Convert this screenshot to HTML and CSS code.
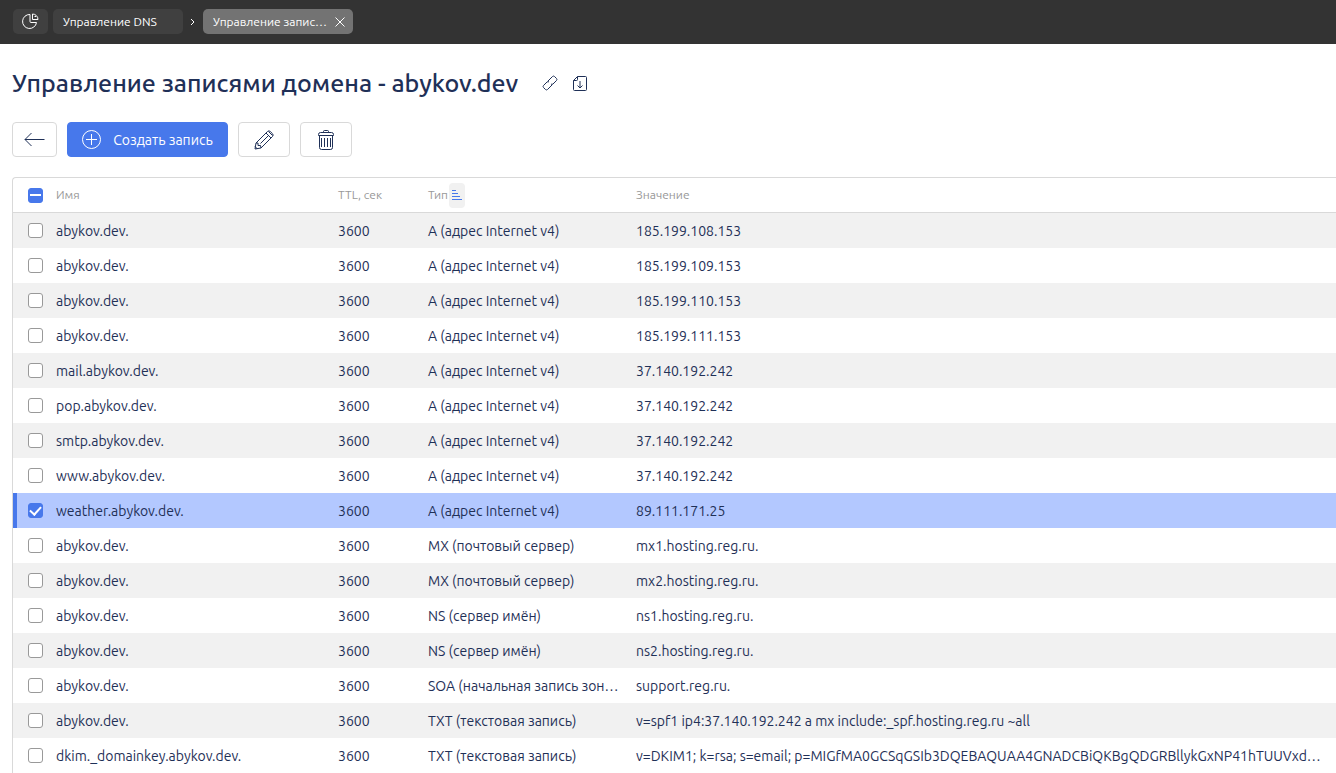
FILE: index.html
```html
<!DOCTYPE html>
<html lang="ru">
<head>
    <meta charset="UTF-8">
    <title>Управление записями домена - abykov.dev</title>
    <link rel="stylesheet" href="styles.css">
</head>
<body>
    <nav class="topbar">
        <a class="tab tab-home" href="#" aria-label="Главная">
            <svg width="17" height="17" viewBox="0 0 17 17"><path d="M8 1.500A7 7 0 1 0 14.500 9.500H9A1 1 0 0 1 8 8.500z"/><path d="M10.500 1v5.500h5.500A5.500 5.500 0 0 0 10.500 1z"/><path d="M12.500 3.500h1.500"/></svg>
        </a>
        <a class="tab tab-link" href="#">Управление DNS</a>
        <svg class="chevron" width="6" height="8" viewBox="0 0 6 8"><path d="M1 1l3 3-3 3"/></svg>
        <div class="tab tab-active">
            <span class="tab-text">Управление записями домена</span>
            <button class="tab-close" aria-label="Закрыть">
                <svg width="10" height="10" viewBox="0 0 10 10"><path d="M.5.5l9 9M9.500.5l-9 9"/></svg>
            </button>
        </div>
    </nav>

    <main class="page">
        <div class="page-header">
            <h1>Управление записями домена - abykov.dev</h1>
            <button class="icon-button" aria-label="Ссылка">
                <svg width="16" height="16" viewBox="0 0 16 16"><path d="M6 6L10.500 1.500a1.500 1.500 0 0 1 2 0l2 2a1.500 1.500 0 0 1 0 2L11 9a1.500 1.500 0 0 1-2 0"/><path d="M10 10L5.500 14.500a1.500 1.500 0 0 1-2 0l-2-2a1.500 1.500 0 0 1 0-2L5 7a1.500 1.500 0 0 1 2 0"/></svg>
            </button>
            <button class="icon-button" aria-label="Экспорт">
                <svg width="14" height="15" viewBox="0 0 14 15"><path d="M4.500.5h8a1 1 0 0 1 1 1v12a1 1 0 0 1-1 1h-11a1 1 0 0 1-1-1v-9zM4.500.5v3a1 1 0 0 1-1 1h-3M7 5v7M4.500 9.500L7 12l2.500-2.500"/></svg>
            </button>
        </div>

        <div class="toolbar">
            <button class="btn btn-back" aria-label="Назад">
                <svg width="21" height="15" viewBox="0 0 21 15"><path d="M20.500 7.500H1M7.500 1L1 7.500 7.500 14"/></svg>
            </button>
            <button class="btn btn-primary">
                <svg width="19" height="19" viewBox="0 0 19 19"><circle cx="9.500" cy="9.500" r="9"/><path d="M9.500 4v11M4 9.500h11"/></svg>
                Создать запись
            </button>
            <button class="btn btn-icon" aria-label="Изменить">
                <svg width="20" height="20" viewBox="0 0 20 20"><path d="M1 19l1-6L13.500 1.500a2 2 0 0 1 2.800 0L18.500 3.700a2 2 0 0 1 0 2.800L7 18zM2 13h2v2.500h2.500L7 18M12 3l5 5M14.500 1.500l4 4M14 6L6.500 13.500M1 16.500L3.500 19"/></svg>
            </button>
            <button class="btn btn-icon" aria-label="Удалить">
                <svg width="18" height="20" viewBox="0 0 18 20"><path d="M1.500 5.500V4.500a2 2 0 0 1 2-2h11a2 2 0 0 1 2 2v1zM6.500 2.500V1.500a1 1 0 0 1 1-1h3a1 1 0 0 1 1 1v1M2.500 5.500v12a2 2 0 0 0 2 2h9a2 2 0 0 0 2-2v-12M4.500 8v9M7.500 8v9M10.500 8v9M13.500 8v9"/></svg>
            </button>
        </div>

        <div class="table-wrap">
            <table class="records">
                <colgroup>
                    <col class="col-check">
                    <col class="col-name">
                    <col class="col-ttl">
                    <col class="col-type">
                    <col>
                </colgroup>
                <thead>
                    <tr>
                        <th><input type="checkbox" class="check check-all" aria-label="Выбрать все"></th>
                        <th>Имя</th>
                        <th>TTL, сек</th>
                        <th>
                            <div class="sortable">Тип
                                <button class="sort" aria-label="Сортировка">
                                    <svg width="10" height="11" viewBox="0 0 10 11"><path d="M0 .5h4M0 3.500h6M0 6.500h8M0 9.500h10"/></svg>
                                </button>
                            </div>
                        </th>
                        <th>Значение</th>
                    </tr>
                </thead>
                <tbody id="records"></tbody>
            </table>
        </div>
    </main>

    <script src="script.js"></script>
</body>
</html>
```

FILE: styles.css
```css
* {
    box-sizing: border-box;
}
body {
    margin: 0;
    font-family: Ubuntu, "Noto Sans", sans-serif;
    font-size: 14px;
    color: #1f3057;
    background: #fff;
    overflow: hidden;
}
svg {
    display: block;
    flex: none;
    fill: none;
    stroke: currentColor;
}
button {
    font: inherit;
    color: inherit;
    padding: 0;
    border: none;
    background: none;
    cursor: pointer;
}

/* top bar */
.topbar {
    display: flex;
    align-items: center;
    padding: 9px 13px 10px;
    background: #333;
    color: #fff;
    font-size: 12px;
}
.tab {
    display: flex;
    align-items: center;
    height: 25px;
    padding: 0 10px;
    border-radius: 5px;
    background: #404040;
    color: #fff;
    text-decoration: none;
    white-space: nowrap;
}
.tab-home {
    justify-content: center;
    width: 35px;
    margin-right: 5px;
    padding: 0;
}
.tab-link {
    width: 130px;
}
.chevron {
    margin: 0 7px;
}
.tab-active {
    width: 150px;
    padding-right: 8px;
    gap: 6px;
    background: #737373;
}
.tab-text {
    flex: 1;
    overflow: hidden;
    text-overflow: ellipsis;
}

/* title and buttons */
.page {
    padding-left: 12px;
}
.page-header {
    display: flex;
    align-items: center;
    gap: 15px;
    height: 78px;
}
h1 {
    margin: 0 9px 0 0;
    font-size: 25px;
    font-weight: 500;
    white-space: nowrap;
}
.toolbar {
    display: flex;
    gap: 10px;
    margin-bottom: 20px;
}
.btn {
    display: flex;
    align-items: center;
    justify-content: center;
    height: 35px;
    border: 1px solid #d9d9d9;
    border-radius: 4px;
}
.btn-back {
    width: 45px;
}
.btn-icon {
    width: 52px;
}
.btn-primary {
    width: 161px;
    gap: 12px;
    border-color: #4778eb;
    background: #4778eb;
    color: #fff;
}

/* records table */
.table-wrap {
    border: 1px solid #d9d9d9;
    border-right: none;
    border-radius: 4px 0 0 0;
    overflow: hidden;
}
.records {
    width: 100%;
    table-layout: fixed;
    border-collapse: separate;
    border-spacing: 0;
}
.col-check {
    width: 35px;
}
.col-name {
    width: 282px;
}
.col-ttl {
    width: 90px;
}
.col-type {
    width: 208px;
}
.records th,
.records td {
    height: 35px;
    padding: 0 7px 0 8px;
    line-height: 20px;
    text-align: left;
    vertical-align: middle;
    white-space: nowrap;
    overflow: hidden;
    text-overflow: ellipsis;
}
.records th {
    border-bottom: 1px solid #d9d9d9;
    color: #999;
    font-size: 12px;
    font-weight: 400;
}
.records th:first-child,
.records td:first-child {
    padding: 0 0 0 15px;
}
.records tbody tr:nth-child(odd) {
    background: #f1f1f1;
}
.records tbody tr.selected {
    background: #b3c8ff;
}
.records tr.selected td:first-child {
    box-shadow: inset 4px 0 #4778eb;
}
.sortable {
    display: flex;
    align-items: center;
    gap: 1px;
}
.sort {
    display: flex;
    align-items: center;
    justify-content: center;
    width: 16px;
    height: 25px;
    border-radius: 4px;
    background: #f1f1f1;
    color: #4778eb;
}
.check {
    appearance: none;
    display: grid;
    place-items: center;
    width: 15px;
    height: 15px;
    margin: 0;
    border: 1px solid #999;
    border-radius: 3px;
    background: #fff;
}
.check:checked,
.check-all {
    border-color: #4778eb;
    background: #4778eb;
}
.check:checked::before {
    content: "";
    width: 5px;
    height: 9px;
    margin-bottom: 2px;
    border: solid #fff;
    border-width: 0 2px 2px 0;
    transform: rotate(42deg);
}
.check-all::before {
    content: "";
    width: 11px;
    height: 2px;
    background: #fff;
}
```

FILE: script.js
```js
const A = 'A (адрес Internet v4)';
const MX = 'MX (почтовый сервер)';
const NS = 'NS (сервер имён)';
const SOA = 'SOA (начальная запись зоны DNS)';
const TXT = 'TXT (текстовая запись)';

const records = [
    ['abykov.dev.', A, '185.199.108.153'],
    ['abykov.dev.', A, '185.199.109.153'],
    ['abykov.dev.', A, '185.199.110.153'],
    ['abykov.dev.', A, '185.199.111.153'],
    ['mail.abykov.dev.', A, '37.140.192.242'],
    ['pop.abykov.dev.', A, '37.140.192.242'],
    ['smtp.abykov.dev.', A, '37.140.192.242'],
    ['www.abykov.dev.', A, '37.140.192.242'],
    ['weather.abykov.dev.', A, '89.111.171.25', true],
    ['abykov.dev.', MX, 'mx1.hosting.reg.ru.'],
    ['abykov.dev.', MX, 'mx2.hosting.reg.ru.'],
    ['abykov.dev.', NS, 'ns1.hosting.reg.ru.'],
    ['abykov.dev.', NS, 'ns2.hosting.reg.ru.'],
    ['abykov.dev.', SOA, 'support.reg.ru.'],
    ['abykov.dev.', TXT, 'v=spf1 ip4:37.140.192.242 a mx include:_spf.hosting.reg.ru ~all'],
    ['dkim._domainkey.abykov.dev.', TXT, 'v=DKIM1; k=rsa; s=email; p=MIGfMA0GCSqGSIb3DQEBAQUAA4GNADCBiQKBgQDGRBllykGxNP41hTUUVxdQIDAQAB'],
];

const tbody = document.getElementById('records');

records.forEach(([name, type, value, selected]) => {
    const row = tbody.insertRow();
    const check = document.createElement('input');
    check.type = 'checkbox';
    check.className = 'check';
    check.checked = Boolean(selected);
    check.setAttribute('aria-label', name);
    row.insertCell().appendChild(check);
    row.classList.toggle('selected', check.checked);
    check.addEventListener('change', () => row.classList.toggle('selected', check.checked));

    [name, '3600', type, value].forEach((text) => {
        row.insertCell().textContent = text;
    });
});
```
